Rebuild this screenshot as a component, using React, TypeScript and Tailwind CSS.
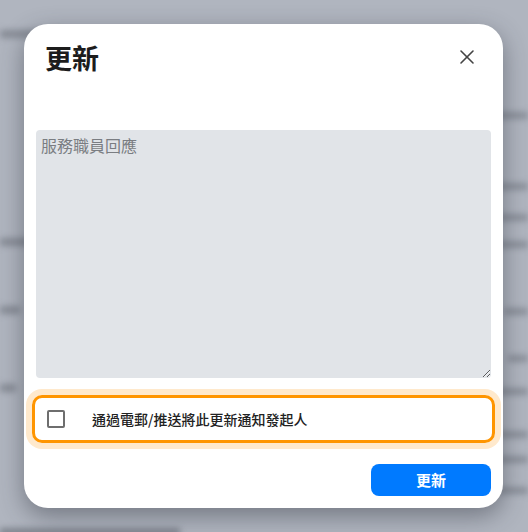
import { X } from 'lucide-react';

const leftBars = [
  { top: 'mt-[30px]', w: 'w-[60px]' },
  { top: 'mt-[200px]', w: 'w-[30px]' },
  { top: 'mt-[60px]', w: 'w-[20px]' },
  { top: 'mt-[70px]', w: 'w-[16px]' },
];

const rightBars = [
  { top: 'mt-[112px]', w: 'w-[40px]' },
  { top: 'mt-[64px]', w: 'w-[30px]' },
  { top: 'mt-[24px]', w: 'w-[30px]' },
  { top: 'mt-[20px]', w: 'w-[30px]' },
  { top: 'mt-[60px]', w: 'w-[24px]' },
  { top: 'mt-[40px]', w: 'w-[20px]' },
  { top: 'mt-[26px]', w: 'w-[30px]' },
  { top: 'mt-[36px]', w: 'w-[30px]' },
  { top: 'mt-[18px]', w: 'w-[30px]' },
  { top: 'mt-[24px]', w: 'w-[30px]' },
];

export default function App() {
  return (
    <div
      className="relative h-[532px] w-[528px] overflow-hidden bg-[#b0b5bf]"
      style={{ fontFamily: '"Noto Sans CJK TC", "Noto Sans", sans-serif' }}
    >
      {/* blurred page behind the dialog */}
      <div className="flex h-full justify-between blur-[3px]">
        <div className="flex flex-col">
          {leftBars.map((b, i) => (
            <div key={i} className={`${b.top} ${b.w} h-[8px] bg-[#878c96]`} />
          ))}
        </div>
        <div className="flex flex-col items-end">
          {rightBars.map((b, i) => (
            <div key={i} className={`${b.top} ${b.w} h-[7px] bg-[#8a8f99]`} />
          ))}
        </div>
      </div>
      <div className="absolute bottom-[-4px] left-0 h-[8px] w-[180px] bg-[#7e838d] blur-[3px]" />

      {/* dialog */}
      <div className="absolute left-[24px] top-[24px] flex h-[484px] w-[479px] flex-col rounded-[24px] bg-white p-3 shadow-[0_8px_24px_rgba(40,45,55,0.45)]">
        <div className="flex h-[42px] items-center justify-between pl-[9px]">
          <h2 className="text-[27px] font-bold leading-none text-[#1c1c1c]">更新</h2>
          <button className="mr-[8px] flex h-8 w-8 items-center justify-center text-[#444]">
            <X size={24} strokeWidth={1.6} />
          </button>
        </div>

        <textarea
          placeholder="服務職員回應"
          className="mt-[52px] h-[248px] w-full resize-y rounded-[4px] bg-[#e1e4e8] px-[5px] py-[4px] text-[16px] leading-[22px] text-[#333] placeholder:text-[#7a7d82] outline-none"
        />

        <label className="mx-[-4px] mt-[17px] flex h-[48px] items-center rounded-[10px] border-[3px] border-[#ff9500] pl-[12px] shadow-[0_0_0_6px_#ffe9cc]">
          <span className="h-[18px] w-[18px] rounded-[2px] border-2 border-[#6e6e6e]" />
          <span className="ml-[27px] text-[14px] font-medium text-[#222]">通過電郵/推送將此更新通知發起人</span>
        </label>

        <div className="mt-[21px] flex justify-end">
          <button className="h-[32px] w-[120px] rounded-[8px] bg-[#007aff] text-[15px] font-bold text-white">
            更新
          </button>
        </div>
      </div>
    </div>
  );
}
